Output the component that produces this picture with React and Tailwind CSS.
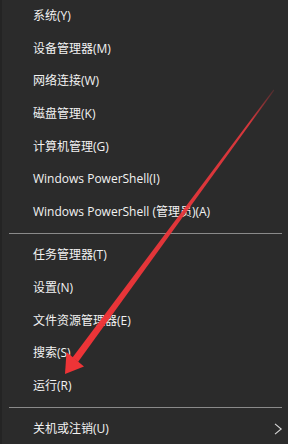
import React from 'react';

const groupA = [
  '系统(Y)',
  '设备管理器(M)',
  '网络连接(W)',
  '磁盘管理(K)',
  '计算机管理(G)',
  'Windows PowerShell(I)',
  'Windows PowerShell (管理员)(A)',
];

const groupB = ['任务管理器(T)', '设置(N)', '文件资源管理器(E)', '搜索(S)', '运行(R)'];

function Item({ label, children }) {
  return (
    <div className="h-[32.6px] flex items-center pl-[31px] pr-[5px] text-[12px] text-[#f2f2f2]">
      <span className="flex-1">{label}</span>
      {children}
    </div>
  );
}

function Separator() {
  return (
    <div className="h-[11px] flex items-center pl-[7px] pr-[6px]">
      <div className="h-px w-full bg-[#8a8a8a]" />
    </div>
  );
}

export default function App() {
  return (
    <div
      className="relative w-[288px] h-[444px] overflow-hidden bg-[#2b2b2b] border-l-2 border-[#242424]"
      style={{ fontFamily: '"Open Sans", "Noto Sans CJK SC", sans-serif' }}
    >
      <div className="flex flex-col">
        {groupA.map((t) => (
          <Item key={t} label={t} />
        ))}
        <Separator />
        {groupB.map((t) => (
          <Item key={t} label={t} />
        ))}
        <Separator />
        <Item label="关机或注销(U)">
          <svg width="9" height="12" viewBox="0 0 9 12" className="mr-[0px]">
            <path d="M1 0.8 L7.2 6 L1 11.2" fill="none" stroke="#d8d8d8" strokeWidth="1.1" />
          </svg>
        </Item>
      </div>

      {/* red annotation arrow */}
      <svg className="absolute left-0 top-0 pointer-events-none" width="288" height="444" viewBox="0 0 288 444">
        <defs>
          <linearGradient id="fade" x1="271" y1="90" x2="70" y2="360" gradientUnits="userSpaceOnUse">
            <stop offset="0" stopColor="#e8383d" stopOpacity="0.2" />
            <stop offset="0.12" stopColor="#e8383d" stopOpacity="0.9" />
            <stop offset="1" stopColor="#ee3437" />
          </linearGradient>
        </defs>
        <polygon points="271.5,89.5 272.2,90.5 76,362 70.5,357.5" fill="url(#fade)" />
        <polygon points="63,374 64.5,352 82,366.5" fill="#ee3437" />
      </svg>
    </div>
  );
}
